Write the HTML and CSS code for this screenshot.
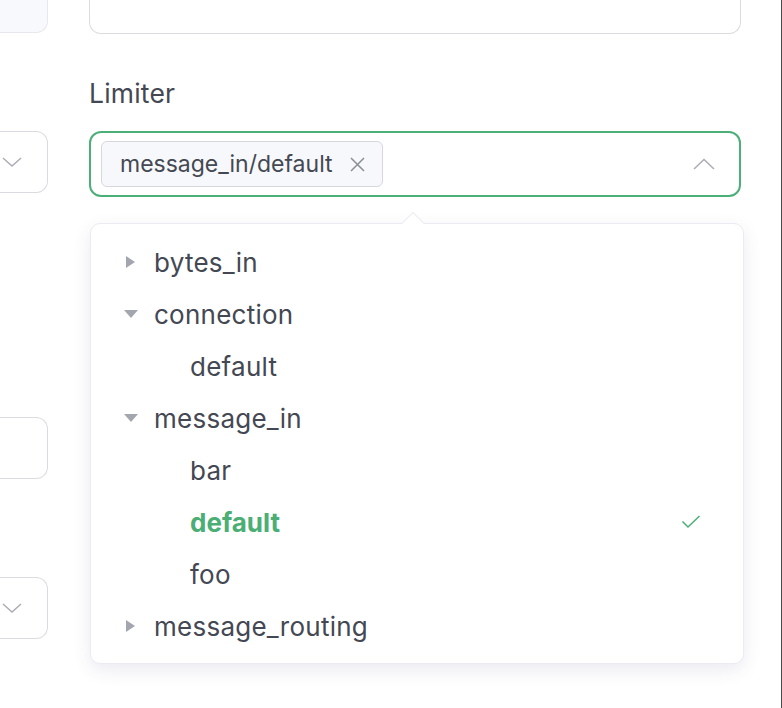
FILE: index.html
```html
<!DOCTYPE html>
<html>
<head>
<meta charset="utf-8">
<link rel="stylesheet" href="styles.css">
</head>
<body>
<div class="page">
  <div class="side">
    <div class="sbox sbox-top"></div>
    <div class="sbox sbox-2">
      <svg class="chev" width="20" height="10" viewBox="0 0 20 10"><path d="M1 1 L10 9 L19 1" fill="none" stroke="#a9acb4" stroke-width="1.4"/></svg>
    </div>
    <div class="sbox sbox-3"></div>
    <div class="sbox sbox-4">
      <svg class="chev" width="20" height="10" viewBox="0 0 20 10"><path d="M1 1 L10 9 L19 1" fill="none" stroke="#a9acb4" stroke-width="1.4"/></svg>
    </div>
  </div>
  <div class="main">
    <div class="field-top"></div>
    <div class="label">Limiter</div>
    <div class="select">
      <div class="tag">
        <span class="tag-text">message_in/default</span>
        <svg class="tag-x" width="15" height="15" viewBox="0 0 15 15"><path d="M1 1 L14 14 M14 1 L1 14" stroke="#8a8d96" stroke-width="1.5"/></svg>
      </div>
      <svg class="caret" width="22" height="12" viewBox="0 0 22 12"><path d="M1 11 L11 1.5 L21 11" fill="none" stroke="#a9acb4" stroke-width="1.5"/></svg>
    </div>
    <div class="dropdown">
      <div class="arrow"></div>
      <ul class="tree">
        <li class="row"><span class="tri tri-right"></span><span class="txt">bytes_in</span></li>
        <li class="row"><span class="tri tri-down"></span><span class="txt">connection</span></li>
        <li class="row child"><span class="txt">default</span></li>
        <li class="row"><span class="tri tri-down"></span><span class="txt">message_in</span></li>
        <li class="row child"><span class="txt">bar</span></li>
        <li class="row child selected"><span class="txt">default</span>
          <svg class="check" width="20" height="14" viewBox="0 0 20 14"><path d="M1.5 6.5 L7 12 L18.5 1" fill="none" stroke="#4aaf77" stroke-width="1.5"/></svg>
        </li>
        <li class="row child"><span class="txt">foo</span></li>
        <li class="row"><span class="tri tri-right"></span><span class="txt">message_routing</span></li>
      </ul>
    </div>
  </div>
</div>
</body>
</html>
```

FILE: styles.css
```css
* { box-sizing: border-box; }
html, body { margin: 0; padding: 0; background: #fff; }
body {
  font-family: Inter, "Noto Sans", "Liberation Sans", sans-serif;
  color: #444853;
  width: 782px;
  height: 708px;
  overflow: hidden;
}
.page {
  display: flex;
  width: 782px;
  height: 708px;
  border-right: 1px solid #4a4a4a;
}
.side {
  width: 48px;
  display: flex;
  flex-direction: column;
}
.sbox {
  width: 48px;
  height: 62px;
  border: 1.5px solid #d9dbe1;
  border-left: none;
  border-radius: 0 12px 12px 0;
  background: #fff;
  display: flex;
  align-items: center;
}
.sbox-top {
  height: 33px;
  border-top: none;
  border-radius: 0 0 12px 0;
  background: #f8f9fd;
  border-color: #e6e8ee;
}
.sbox-2 { margin-top: 98px; }
.sbox-3 { margin-top: 224px; }
.sbox-4 { margin-top: 98px; }
.chev { margin-left: 2px; }
.main {
  position: relative;
  margin-left: 41px;
  width: 652px;
}
.field-top {
  height: 34px;
  border: 1.5px solid #d9dbe1;
  border-top: none;
  border-radius: 0 0 12px 12px;
}
.label {
  margin-top: 42px;
  height: 34px;
  font-size: 26.5px;
  line-height: 34px;
  letter-spacing: 0.2px;
  color: #444853;
}
.select {
  margin-top: 21px;
  height: 66px;
  border: 2px solid #4caf78;
  border-radius: 12px;
  display: flex;
  align-items: center;
  padding: 0 24px 0 10px;
  justify-content: space-between;
}
.tag {
  height: 46px;
  width: 282px;
  border: 1.5px solid #d6d8de;
  background: #f7f8fb;
  border-radius: 6px;
  display: flex;
  align-items: center;
  padding: 0 17px 0 18px;
  justify-content: space-between;
}
.tag-text {
  font-size: 23px;
  color: #444853;
}
.tag-x { margin-top: 1px; }
.dropdown {
  position: absolute;
  top: 223px;
  left: 1px;
  width: 654px;
  height: 441px;
  border: 1.5px solid #ebebf3;
  border-radius: 10px;
  background: #fff;
  box-shadow: 0 6px 18px rgba(60, 60, 120, 0.1);
  padding: 12px 0;
}
.arrow {
  position: absolute;
  top: -9px;
  left: 314px;
  width: 16px;
  height: 16px;
  background: #fff;
  border-left: 1.5px solid #ebebf3;
  border-top: 1.5px solid #ebebf3;
  transform: rotate(45deg);
}
.tree {
  list-style: none;
  margin: 0;
  padding: 0;
  position: relative;
}
.row {
  height: 52px;
  display: flex;
  align-items: center;
  padding-left: 33px;
  font-size: 26px;
  letter-spacing: 0.25px;
  position: relative;
}
.tri {
  width: 0;
  height: 0;
}
.tri-right {
  border-top: 6px solid transparent;
  border-bottom: 6px solid transparent;
  border-left: 9px solid #a3a6ae;
  margin-left: 2px;
  margin-right: 19px;
}
.tri-down {
  border-left: 7px solid transparent;
  border-right: 7px solid transparent;
  border-top: 8px solid #a3a6ae;
  margin-right: 16px;
}
.row.child { padding-left: 99px; }
.row.selected .txt {
  color: #4aae75;
  font-weight: 700;
  letter-spacing: 0;
}
.check {
  position: absolute;
  left: 590px;
  top: 19px;
}
```
